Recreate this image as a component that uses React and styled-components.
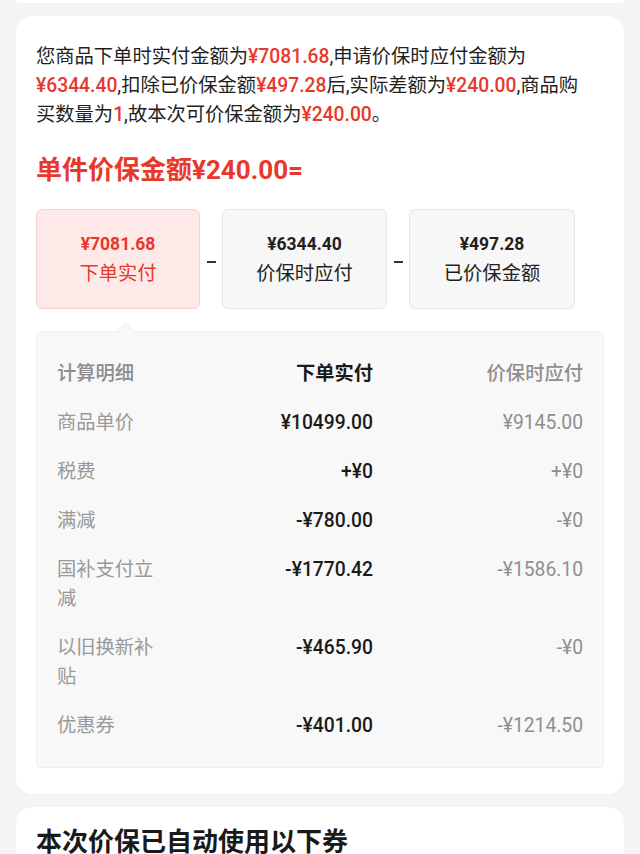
import styled, { createGlobalStyle } from "styled-components";

const GlobalStyle = createGlobalStyle`
  html, body {
    margin: 0;
    padding: 0;
    background: #f4f4f4;
  }
  body {
    font-family: Roboto, "Noto Sans CJK SC", "Noto Sans", sans-serif;
    color: #1a1a1a;
  }
`;

const Page = styled.div`
  width: 640px;
  min-height: 854px;
  padding: 0 16px;
  box-sizing: border-box;
  display: flex;
  flex-direction: column;
  gap: 13px;
  overflow: hidden;
`;

const PrevCardTail = styled.div`
  height: 3px;
  background: #ffffff;
  border-radius: 0 0 3px 3px;
`;

const Card = styled.section`
  background: #ffffff;
  border-radius: 16px;
  padding: ${(p) => p.$pad || "26px 20px 26px 20px"};
`;

const Desc = styled.p`
  margin: 0;
  font-size: 19.3px;
  line-height: 29px;
  color: #1f1f1f;
  white-space: nowrap;
`;

const Red = styled.span`
  color: #e8382b;
  font-weight: 500;
`;

const Headline = styled.h2`
  margin: ${(p) => p.$mt ?? 24}px 0 0 0;
  font-size: 26px;
  line-height: 34px;
  font-weight: 700;
  color: ${(p) => p.$color || "#1a1a1a"};
`;

const Formula = styled.div`
  display: flex;
  align-items: center;
  margin-top: 22px;
`;

const Box = styled.div`
  width: ${(p) => p.$w}px;
  height: 100px;
  box-sizing: border-box;
  border-radius: 6px;
  border: 1px solid ${(p) => (p.$active ? "#f8d4d1" : "#e6e6e6")};
  background: ${(p) => (p.$active ? "#fde9e8" : "#f7f7f7")};
  color: ${(p) => (p.$active ? "#e8382b" : "#1f1f1f")};
  display: flex;
  flex-direction: column;
  align-items: center;
  justify-content: center;
  gap: 5px;
`;

const BoxAmount = styled.div`
  font-size: 17.5px;
  line-height: 24px;
  font-weight: 700;
`;

const BoxLabel = styled.div`
  font-size: 19.3px;
  line-height: 26px;
`;

const Minus = styled.div`
  width: 22px;
  display: flex;
  justify-content: center;
  padding-top: 6px;

  &::before {
    content: "";
    width: 9px;
    height: 1.5px;
    background: #333;
  }
`;

const Detail = styled.div`
  position: relative;
  margin-top: 22px;
  background: #f8f8f8;
  border: 1px solid #efefef;
  border-radius: 5px;
  padding: 26.5px 20px 27px 20px;
  display: flex;
  flex-direction: column;
  gap: 20px;

  &::before {
    content: "";
    position: absolute;
    top: -8px;
    left: 83px;
    width: 12px;
    height: 12px;
    background: #f8f8f8;
    border-top: 1px solid #e4e4e4;
    border-left: 1px solid #e4e4e4;
    transform: rotate(45deg) scaleY(0.8);
    border-top-left-radius: 2px;
  }
`;

const Row = styled.div`
  display: grid;
  grid-template-columns: 100px 216px 1fr;
  font-size: 19.3px;
  line-height: 29px;
`;

const Label = styled.div`
  color: ${(p) => (p.$head ? "#8c8c8c" : "#999999")};
  font-weight: ${(p) => (p.$head ? 500 : 400)};
`;

const Paid = styled.div`
  text-align: right;
  color: #1a1a1a;
  font-weight: ${(p) => (p.$head ? 700 : 500)};
`;

const Due = styled.div`
  text-align: right;
  color: #8f8f8f;
  font-weight: ${(p) => (p.$head ? 500 : 400)};
`;

const rows = [
  ["商品单价", "¥10499.00", "¥9145.00"],
  ["税费", "+¥0", "+¥0"],
  ["满减", "-¥780.00", "-¥0"],
  ["国补支付立减", "-¥1770.42", "-¥1586.10"],
  ["以旧换新补贴", "-¥465.90", "-¥0"],
  ["优惠券", "-¥401.00", "-¥1214.50"],
];

export default function App() {
  return (
    <>
      <GlobalStyle />
      <Page>
        <PrevCardTail />
        <Card>
          <Desc>
            您商品下单时实付金额为<Red>¥7081.68</Red>,申请价保时应付金额为
            <br />
            <Red>¥6344.40</Red>,扣除已价保金额<Red>¥497.28</Red>后,实际差额为
            <Red>¥240.00</Red>,商品购
            <br />
            买数量为<Red>1</Red>,故本次可价保金额为<Red>¥240.00</Red>。
          </Desc>
          <Headline $color="#e8382b">单件价保金额¥240.00=</Headline>
          <Formula>
            <Box $active $w={164}>
              <BoxAmount>¥7081.68</BoxAmount>
              <BoxLabel>下单实付</BoxLabel>
            </Box>
            <Minus />
            <Box $w={165}>
              <BoxAmount>¥6344.40</BoxAmount>
              <BoxLabel>价保时应付</BoxLabel>
            </Box>
            <Minus />
            <Box $w={166}>
              <BoxAmount>¥497.28</BoxAmount>
              <BoxLabel>已价保金额</BoxLabel>
            </Box>
          </Formula>
          <Detail>
            <Row>
              <Label $head>计算明细</Label>
              <Paid $head>下单实付</Paid>
              <Due $head>价保时应付</Due>
            </Row>
            {rows.map(([name, paid, due]) => (
              <Row key={name}>
                <Label>{name}</Label>
                <Paid>{paid}</Paid>
                <Due>{due}</Due>
              </Row>
            ))}
          </Detail>
        </Card>
        <Card $pad="18px 20px 20px 20px">
          <Headline $mt={0}>本次价保已自动使用以下券</Headline>
        </Card>
      </Page>
    </>
  );
}
